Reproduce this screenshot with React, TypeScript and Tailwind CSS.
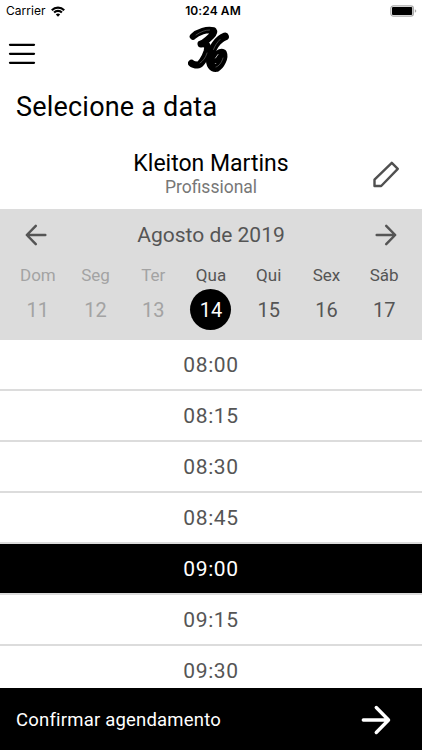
import { useState } from "react";

// ─── Data ─────────────────────────────────────────────────────────────────────

const DAYS = [
    { label: "Dom", day: 11, past: true },
    { label: "Seg", day: 12, past: true },
    { label: "Ter", day: 13, past: true },
    { label: "Qua", day: 14, past: false },
    { label: "Qui", day: 15, past: false },
    { label: "Sex", day: 16, past: false },
    { label: "Sáb", day: 17, past: false },
];

const TIMES = ["08:00", "08:15", "08:30", "08:45", "09:00", "09:15", "09:30"];

// ─── Icons ────────────────────────────────────────────────────────────────────

function Arrow({ className }: { className: string }) {
    return (
        <svg viewBox="0 0 22 22" className={className} fill="none" stroke="currentColor"
            strokeWidth="2.5" strokeLinecap="round" strokeLinejoin="round" aria-hidden="true">
            <path d="M1.7 11H20M11.2 1.8l9 9.2-9 9.2" />
        </svg>
    );
}

function Logo() {
    return (
        <svg viewBox="0 0 42 50" className="w-[42px] h-[50px]" fill="none" stroke="#000"
            strokeLinecap="round" strokeLinejoin="round" aria-label="36">
            <path d="M5 12.500C10 7.500 19 5 25.500 6.500c2 2.500-4 8-11 13" strokeWidth="6.600" />
            <path d="M13 20c6-1 7.500 2 6 7.500-2.500 7.500-6.500 13.500-9.500 13.500-2.500 0-5-.8-6-1.800" strokeWidth="7" />
            <path d="M37 12.500C30 15 23 25 22 33c-1 8 2.500 11.500 6.500 11 4.500-2.500 8.500-10.500 6.500-15-2.500-1.500-6 1.500-8.500 6.500" strokeWidth="7.800" />
            <path d="M8 11c5-3.500 9.500-5 13.500-5M19 29c-1.500 5-4 8-7 10M35 34c-1.500 5-4 8-7 9M32 15.500c-3 3-5 6-6.500 10" stroke="#777" strokeWidth=".6" />
            <path d="M27.500 34l2.500-3.500" stroke="#ddd" strokeWidth=".8" />
        </svg>
    );
}

function StatusBar() {
    return (
        <div className="h-[22px] px-[6px] grid grid-cols-3 items-center text-[12px]">
            <div className="flex items-center gap-[5px]">
                <span className="tracking-[0.05px]">Carrier</span>
                <svg viewBox="0 0 14 11" className="w-[14px] h-[11px]" fill="none" stroke="#000" strokeWidth="2.2">
                    <path d="M.8 4.2a8.800 8.800 0 0 1 12.400 0M3.100 6.500a5.500 5.500 0 0 1 7.800 0" />
                    <path d="M7 10.700 4.800 8.500a3.100 3.100 0 0 1 4.400 0z" fill="#000" stroke="none" />
                </svg>
            </div>
            <span className="pl-1 text-center font-semibold tracking-[0.1px] whitespace-nowrap">10:24 AM</span>
            <svg viewBox="0 0 28 12" className="justify-self-end w-7 h-3 -mr-[2px]">
                <rect x=".8" y=".8" width="22.6" height="10.4" rx="2.6" fill="#fff" stroke="#aaa" strokeWidth="1.2" />
                <rect x="2" y="2" width="20.2" height="8" rx="1" fill="#000" />
                <path d="M24.800 4.200c2 .6 2 3 0 3.600z" fill="#aaa" />
            </svg>
        </div>
    );
}

// ─── Page ─────────────────────────────────────────────────────────────────────

export default function App() {
    const [day, setDay] = useState(14);
    const [time, setTime] = useState("09:00");

    return (
        <div className="w-[422px] h-[750px] flex flex-col overflow-hidden bg-white text-black font-[Roboto,sans-serif]">
            <div className="font-[Inter,sans-serif]"><StatusBar /></div>

            {/* Header */}
            <header className="h-[58px] shrink-0 px-2 grid grid-cols-3 items-start">
                <button type="button" aria-label="Menu" className="mt-[21px] w-7">
                    <svg viewBox="0 0 28 22" className="w-7 h-[22px]" stroke="#000" strokeWidth="2.3" strokeLinecap="round">
                        <path d="M2 1.800h24M2 10.800h24M2 19.800h24" />
                    </svg>
                </button>
                <div className="justify-self-center pt-[2px] -ml-1"><Logo /></div>
            </header>

            <h1 className="h-[54px] shrink-0 px-4 flex items-center text-[27px] leading-none tracking-[0.2px]">Selecione a data</h1>

            {/* Profissional */}
            <section className="h-[75px] shrink-0 px-[22px] grid grid-cols-[28px_1fr_28px] items-center">
                <div className="col-start-2 text-center pt-[5px]">
                    <p className="text-[23px] leading-[26px]">Kleiton Martins</p>
                    <p className="text-[17.5px] leading-[21px] text-[#777]">Profissional</p>
                </div>
                <button type="button" aria-label="Editar" className="pt-1 text-[#505050]">
                    <svg viewBox="0 0 28 28" className="w-7 h-7" fill="none" stroke="currentColor" strokeWidth="2.4" strokeLinejoin="round">
                        <path d="M2.500 26v-6.300L19.800 2.800l6 6L9.200 26z" />
                    </svg>
                </button>
            </section>

            {/* Calendário */}
            <section className="h-[131px] shrink-0 bg-[#dcdcdc] text-[#555]">
                <div className="h-[52px] px-[25px] flex items-center justify-between">
                    <button type="button" aria-label="Semana anterior"><Arrow className="w-[22px] h-[22px] rotate-180" /></button>
                    <h2 className="pt-[2px] text-[21px]">Agosto de 2019</h2>
                    <button type="button" aria-label="Próxima semana"><Arrow className="w-[22px] h-[22px]" /></button>
                </div>
                <div className="px-[9px] grid grid-cols-7 text-center">
                    {DAYS.map((d) => (
                        <button key={d.day} type="button" onClick={() => setDay(d.day)}
                            className={`flex flex-col items-center ${d.past ? "text-[#a3a3a3]" : "text-[#555]"}`}>
                            <span className="h-[28px] leading-[28px] text-[17px]">{d.label}</span>
                            <span className={`w-[41px] h-[41px] rounded-full flex items-center justify-center text-[20px] ${d.day === day ? "bg-black text-white" : ""}`}>
                                {d.day}
                            </span>
                        </button>
                    ))}
                </div>
            </section>

            {/* Horários */}
            <div className="flex-1 min-h-0 overflow-hidden">
                {TIMES.map((t) => (
                    <button key={t} type="button" onClick={() => setTime(t)}
                        className={`w-full h-[51px] pt-[2px] flex items-center justify-center border-b-2 border-[#dcdcdc] text-[21px] tracking-[0.6px] ${t === time ? "bg-black text-white" : "text-[#555]"}`}>
                        {t}
                    </button>
                ))}
            </div>

            <button type="button" className="h-[62px] shrink-0 pl-4 pr-[31px] flex items-center justify-between bg-black text-white">
                <span className="pt-[3px] text-[18.5px] tracking-[0.2px]">Confirmar agendamento</span>
                <Arrow className="w-[30px] h-[30px] mt-[2px]" />
            </button>
        </div>
    );
}
